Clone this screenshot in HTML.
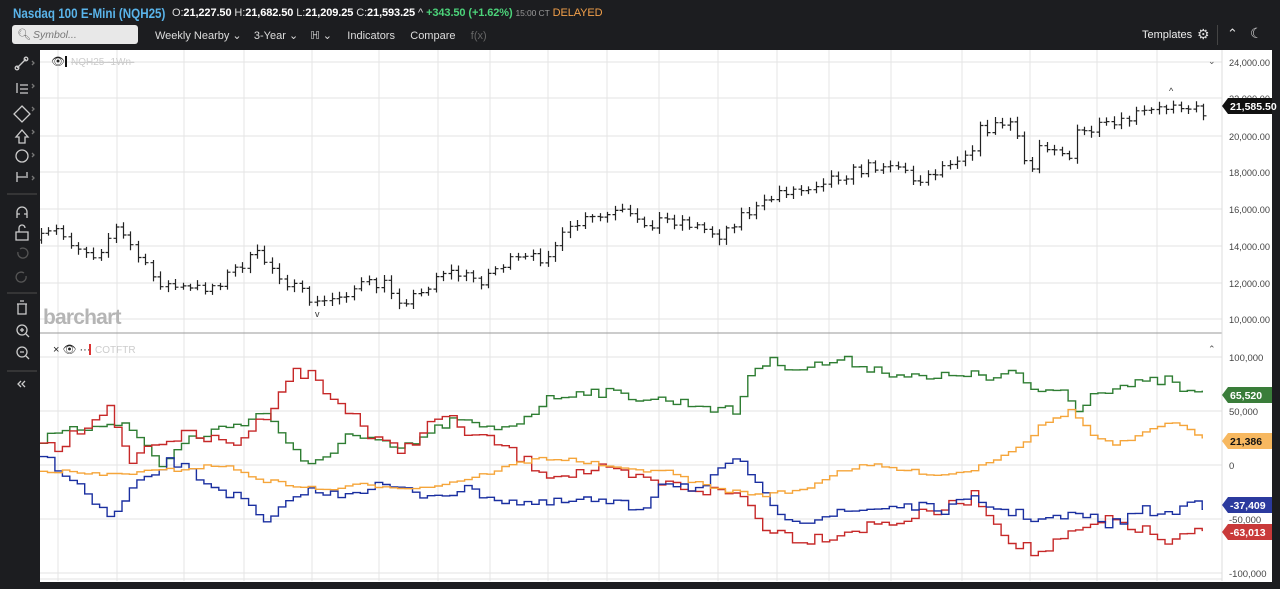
<!DOCTYPE html>
<html><head><meta charset="utf-8">
<style>
*{margin:0;padding:0;box-sizing:border-box}
body{width:1280px;height:589px;background:#1c1d20;font-family:"Liberation Sans",sans-serif;overflow:hidden;position:relative;color:#ddd}
.t{position:absolute;white-space:nowrap}
</style></head><body>
<div class="t" style="left:13px;top:5px;font-size:14px;font-weight:bold;color:#5ab4ea;transform:scaleX(0.83);transform-origin:0 0">Nasdaq 100 E-Mini (NQH25)</div>
<div class="t" style="left:172px;top:7px;font-size:11px;color:#ddd;letter-spacing:-0.1px">O:<b style="color:#fff">21,227.50</b> H:<b style="color:#fff">21,682.50</b> L:<b style="color:#fff">21,209.25</b> C:<b style="color:#fff">21,593.25</b> ^ <b style="color:#4cd37a">+343.50 (+1.62%)</b> <span style="font-size:8.5px;color:#999">15:00 CT</span> <span style="color:#f2a04a">DELAYED</span></div>
<div style="position:absolute;left:12px;top:25px;width:126px;height:19px;background:#e8e8e8;border-radius:3px"></div>
<div class="t" style="left:17px;top:28px;font-size:11px;color:#666">&#x1F50D;&#xFE0E;</div>
<div class="t" style="left:33px;top:29px;font-size:10.5px;color:#777;font-style:italic">Symbol...</div>
<div class="t" style="left:155px;top:29px;font-size:11px;color:#ddd">Weekly Nearby ⌄&nbsp;&nbsp;&nbsp;&nbsp;3-Year ⌄&nbsp;&nbsp;&nbsp;&nbsp;ℍ ⌄&nbsp;&nbsp;&nbsp;&nbsp;&nbsp;Indicators&nbsp;&nbsp;&nbsp;&nbsp;&nbsp;Compare&nbsp;&nbsp;&nbsp;&nbsp;&nbsp;<span style="color:#666">f(x)</span></div>
<div class="t" style="left:1142px;top:29px;font-size:11px;color:#eee">Templates</div>
<div class="t" style="left:1197px;top:26px;font-size:14px;color:#ddd">⚙</div>
<div style="position:absolute;left:1217px;top:25px;width:1px;height:20px;background:#444"></div>
<div class="t" style="left:1227px;top:26px;font-size:13px;color:#ddd">⌃</div>
<div class="t" style="left:1250px;top:25px;font-size:14px;color:#ddd">☾</div>
<svg style="position:absolute;left:0;top:48px" width="40" height="360" fill="none" stroke="#ccc" stroke-width="1.3">
<path d="M17 20 L26 11"/><circle cx="17" cy="20" r="1.8"/><circle cx="26" cy="11" r="1.8"/>
<path d="M17 35 v10 M20 37 h8 M20 41 h8 M20 45 h8"/>
<path d="M22 58 L30 66 L22 74 L14 66 Z"/>
<path d="M22 82 L28 89 H25 V95 H19 V89 H16 Z"/>
<circle cx="22" cy="108" r="6"/>
<path d="M17 124 v10 M17 129 h9 M27 124 v6"/>
<g stroke="#777"><path d="M32 13 l2 2 -2 2 M32 36 l2 2 -2 2 M32 59 l2 2 -2 2 M32 82 l2 2 -2 2 M32 105 l2 2 -2 2 M32 128 l2 2 -2 2"/></g>
<path d="M7 146 H37" stroke="#444"/>
<path d="M17 170 v-6 a5 5 0 0 1 10 0 v6 M17 166 h3 M24 166 h3"/>
<path d="M16 184 h12 v8 h-12 z M19 184 v-4 a3 3 0 0 1 6 0"/>
<g stroke="#555"><path d="M18 204 a5 5 0 1 0 2 -3"/><path d="M26 228 a5 5 0 1 1 -2 -3"/></g>
<path d="M7 245 H37" stroke="#444"/>
<path d="M17 256 h10 M18 256 v10 h8 v-10 M20 253 h4"/>
<circle cx="22" cy="282" r="5"/><path d="M26 286 l3 3 M20 282 h4 M22 280 v4"/>
<circle cx="22" cy="304" r="5"/><path d="M26 308 l3 3 M20 304 h4"/>
<path d="M7 323 H37" stroke="#444"/>
<path d="M21 333 l-3 3 3 3 M25 333 l-3 3 3 3"/>
</svg>
<div style="position:absolute;left:40px;top:50px;width:1232px;height:532px;background:#fff"></div>
<svg id="c" style="position:absolute;left:0;top:0" width="1280" height="589"></svg>
<div class="t" style="left:43px;top:306px;font-size:21px;font-weight:bold;color:#b5b5b5;letter-spacing:-0.8px">barchart</div>
<div class="t" style="left:51px;top:55px;font-size:11px;color:#222">👁&#xFE0E;</div>
<div style="position:absolute;left:65px;top:56px;width:2px;height:11px;background:#111"></div>
<div class="t" style="left:71px;top:57px;font-size:10px;color:#ccc;text-decoration:line-through">NQH25 -1Wn-</div>
<div class="t" style="left:53px;top:343px;font-size:11px;color:#222">× 👁&#xFE0E; ···</div>
<div style="position:absolute;left:89px;top:344px;width:2px;height:11px;background:#d33"></div>
<div class="t" style="left:95px;top:345px;font-size:10px;color:#ccc">COTFTR</div>
<div class="t" style="left:1208px;top:56px;font-size:9px;color:#555">⌄</div>
<div class="t" style="left:1208px;top:344px;font-size:9px;color:#555">⌃</div>
<script>
var s='',NS=document.getElementById('c');
var vx=[58,117,184,244,312,379,438,490,548,607,659,718,777,829,891,962,1030,1097,1157];
vx.forEach(function(x){s+='<line x1="'+x+'" y1="50" x2="'+x+'" y2="581" stroke="#e6e6e6"/>'});
[62,98,136,172,209,246,283,319].forEach(function(y){s+='<line x1="40" y1="'+y+'" x2="1222" y2="'+y+'" stroke="#e3e3e3"/>'});
[357,411,465,519,573,579].forEach(function(y){s+='<line x1="40" y1="'+y+'" x2="1222" y2="'+y+'" stroke="#e3e3e3"/>'});
s+='<line x1="40" y1="333" x2="1222" y2="333" stroke="#999"/>';
s+='<line x1="1222" y1="50" x2="1222" y2="581" stroke="#ddd"/>';
var pl=[['24,000.00',62],['22,000.00',98],['20,000.00',136],['18,000.00',172],['16,000.00',209],['14,000.00',246],['12,000.00',283],['10,000.00',319]];
pl.forEach(function(p){s+='<text x="1229" y="'+(p[1]+4)+'" font-size="9.5" textLength="41" lengthAdjust="spacingAndGlyphs" fill="#444" font-family="Liberation Sans">'+p[0]+'</text>'});
[['100,000',357],['50,000',411],['0',465],['-50,000',519],['-100,000',573]].forEach(function(p){s+='<text x="1229" y="'+(p[1]+4)+'" font-size="9.5" fill="#444" font-family="Liberation Sans">'+p[0]+'</text>'});
var seed=7;function r(){seed=(seed*16807)%2147483647;return seed/2147483647-0.5}
function interp(k,x){for(var i=0;i<k.length-1;i++){if(x<=k[i+1][0]){var t=(x-k[i][0])/(k[i+1][0]-k[i][0]);return k[i][1]+t*(k[i+1][1]-k[i][1])}}return k[k.length-1][1]}
var P=[[40,240],[55,230],[75,245],[95,255],[115,228],[130,245],[150,275],[165,285],[190,290],[215,285],[240,265],[258,255],[275,270],[295,290],[318,305],[340,295],[360,285],[385,285],[400,300],[420,295],[440,270],[460,275],[480,280],[500,265],[520,260],[540,258],[560,240],[580,222],[600,218],[620,212],[640,225],[660,220],[680,220],[700,228],[720,235],[740,215],[760,208],[780,190],[800,190],[820,180],[840,175],[860,170],[880,163],[900,166],[910,180],[930,175],[950,160],[970,150],[980,130],[1000,125],[1010,122],[1020,150],[1030,175],[1040,142],[1060,148],[1068,162],[1075,135],[1100,128],[1120,125],[1135,115],[1150,112],[1165,108],[1175,100],[1185,105],[1200,112]];
var prev=interp(P,40);
for(var x=41;x<1206;x+=7.45){var c=interp(P,x)+r()*12;var o=prev;var h=Math.min(o,c)-2-Math.abs(r())*8,l=Math.max(o,c)+2+Math.abs(r())*8;
var xi=Math.round(x)+0.5;s+='<path d="M'+xi+' '+h.toFixed(1)+'V'+l.toFixed(1)+'M'+(xi-3)+' '+o.toFixed(1)+'H'+xi+'M'+xi+' '+c.toFixed(1)+'H'+(xi+3)+'" stroke="#222" stroke-width="1.2" fill="none"/>';prev=c}
function step(k,col,amp){var d='';for(var x=40;x<1203;x+=7.45){var y=interp(k,x)+r()*amp;if(d==='')d='M40 '+y.toFixed(1);else d+='V'+y.toFixed(1);d+='H'+Math.min(1203,x+7.45).toFixed(1)}s+='<path d="'+d+'" stroke="'+col+'" stroke-width="1.4" fill="none"/>'}
step([[40,440],[110,420],[130,430],[160,465],[185,440],[245,420],[265,412],[305,470],[330,450],[345,435],[400,450],[450,420],[490,430],[520,420],[545,400],[580,390],[620,395],[660,400],[700,405],[720,410],[735,412],[750,368],[770,362],[800,368],[840,360],[870,368],[900,375],[930,380],[960,372],[990,380],[1010,372],[1030,390],[1060,390],[1075,408],[1095,390],[1130,385],[1165,380],[1185,393],[1203,395]],'#2e7d32',10);
step([[40,440],[55,450],[105,405],[125,460],[160,440],[190,435],[230,445],[260,420],[290,372],[310,375],[330,400],[350,410],[370,440],[400,450],[440,415],[470,435],[500,445],[520,460],[550,475],[600,470],[640,480],[700,490],[740,495],[760,525],[800,540],[830,535],[870,525],[900,520],[940,510],[975,495],[990,520],[1010,540],[1035,555],[1060,540],[1080,530],[1110,520],[1140,530],[1170,545],[1185,535],[1203,533]],'#c62828',12);
step([[40,455],[60,470],[110,520],[130,490],[170,460],[200,480],[240,500],[265,525],[300,490],[330,495],[380,485],[420,495],[470,490],[500,500],[540,505],[580,500],[620,505],[640,510],[660,480],[700,490],[720,470],[740,460],[770,510],[800,520],[860,510],[900,505],[940,510],[970,500],[1000,510],[1040,520],[1080,515],[1110,525],[1140,510],[1170,515],[1190,500],[1203,505]],'#1a2fa0',10);
step([[40,470],[100,475],[170,470],[220,465],[260,480],[320,490],[360,485],[420,488],[460,480],[480,475],[510,465],[540,458],[570,460],[600,465],[620,470],[660,470],[700,485],[720,490],[760,495],[800,490],[840,470],[870,465],[900,470],[940,475],[970,470],[990,460],[1010,450],[1025,440],[1040,425],[1070,410],[1090,435],[1110,445],[1130,440],[1150,430],[1170,420],[1185,430],[1203,440]],'#f5a53a',4);
function tag(y,txt,bg,fg){s+='<path d="M1222 '+y+' l6 -8 h44 v16 h-44 z" fill="'+bg+'"/><text x="1230" y="'+(y+4)+'" font-size="10.5" font-weight="bold" fill="'+fg+'" font-family="Liberation Sans">'+txt+'</text>'}
tag(106,'21,585.50','#111','#fff');
tag(395,'65,520','#3a7d3a','#fff');
tag(441,'21,386','#f7b860','#111');
tag(505,'-37,409','#2b3a9e','#fff');
tag(532,'-63,013','#c93a3a','#fff');
s+='<text x="1169" y="94" font-size="9" fill="#333">^</text><text x="315" y="317" font-size="9" fill="#333">v</text>';
NS.innerHTML=s;
</script>
</body></html>
